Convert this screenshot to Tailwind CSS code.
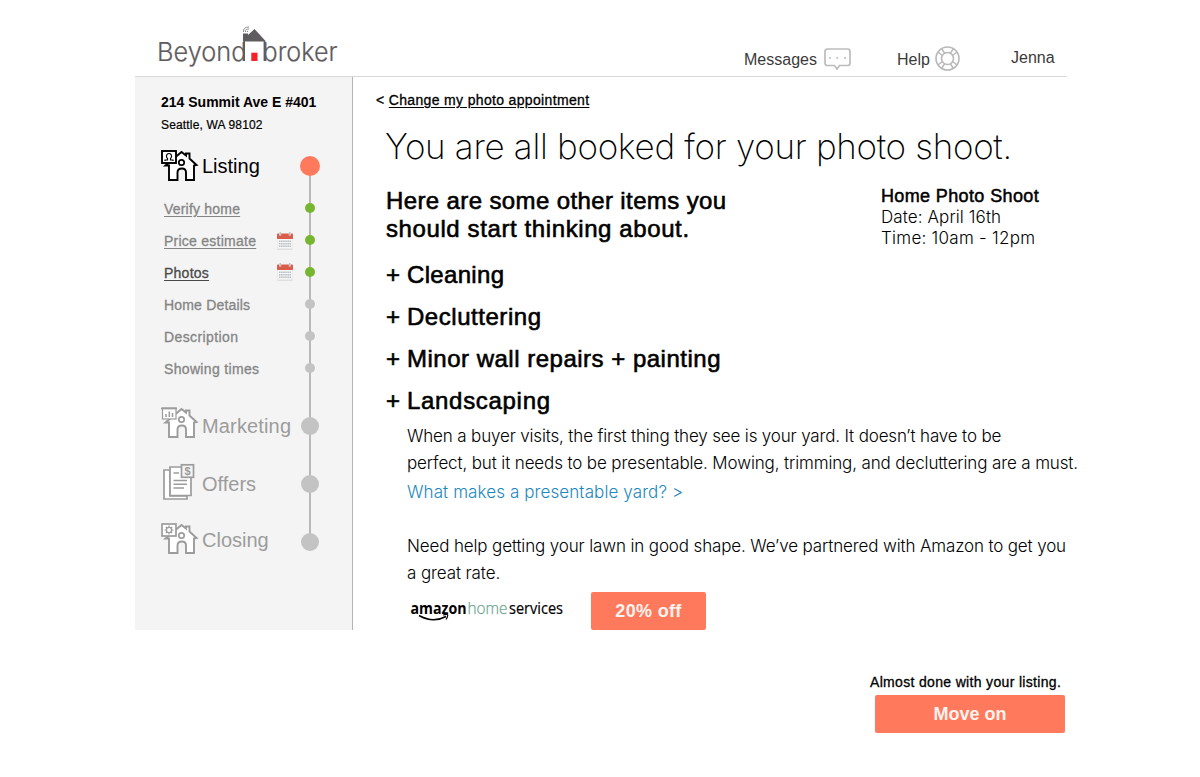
<!DOCTYPE html>
<html lang="en">
<head>
<meta charset="utf-8">
<title>Beyond broker</title>
<script src="https://cdn.jsdelivr.net/npm/@tailwindcss/browser@4"></script>
</head>
<body class="h-[777px] overflow-hidden bg-white font-['Liberation_Sans',sans-serif] text-black">

<svg class="hidden">
  <symbol id="house" viewBox="0 0 38 34">
    <path d="M4.500 16.500 L20.500 3 L25 6.500 V4.500 H28.500 V9.500 L35.500 16 L33 16.500 V31 H25 V23.500 Q25 19.500 21 19.500 Q16.500 19.500 16.500 23.500 V31 H8 V16.500 Z" fill="#fff" stroke="currentColor" stroke-width="1.900"/>
    <circle cx="20.500" cy="13.500" r="2.700" fill="none" stroke="currentColor" stroke-width="1.700"/>
  </symbol>
  <symbol id="calendar" viewBox="0 0 18 18">
    <rect x="1.500" y="2" width="15" height="15.500" fill="#c9c9c9"/>
    <rect x="1.500" y="2" width="15" height="14.700" fill="#f8f8f8"/>
    <rect x="1" y="1.500" width="16" height="5.500" rx=".8" fill="#d95d4b"/>
    <path d="M4.200 0V3.500M13.800 0V3.500" stroke="#eee" stroke-width="2"/>
    <path d="M4.200 0V3M13.800 0V3" stroke="#999" stroke-width=".8"/>
    <path d="M3 9.300H15M3 11.800H15M3 14.300H15" stroke="#b4bac2" stroke-width="1.600" stroke-dasharray="1.500 .6"/>
  </symbol>
</svg>

<header class="ml-[135px] flex h-[77px] w-[932px] items-start border-b border-[#d8d8d8] text-base leading-[20px] text-[#3a3a3a]">
  <svg class="mt-6 ml-[22px] h-[46px] w-[184px] shrink-0" viewBox="157 24 184 46">
    <g font-family="Inter, sans-serif" font-size="26" font-weight="300" fill="#5f5c60" stroke="#5f5c60" stroke-width=".2">
      <text x="157" y="61" textLength="89.500" lengthAdjust="spacingAndGlyphs">Beyond</text>
      <text x="262.500" y="61" textLength="75" lengthAdjust="spacingAndGlyphs">broker</text>
    </g>
    <path d="M243 41.500V33.500H248V35L254.500 29L266 41.500Z" fill="#5f5c60"/>
    <path d="M244.300 41V61M264.300 41V61" stroke="#5f5c60" stroke-width="1.400"/>
    <path d="M243.500 32Q243 27 249 27M245.500 32Q245 29 249 29M247.500 32V31" fill="none" stroke="#8a888b" stroke-width="1"/>
    <rect x="251.300" y="52.700" width="6.200" height="8.300" fill="#f5222a"/>
  </svg>
  <span class="ml-[403px] mt-[50px] w-[80px]">Messages</span>
  <svg class="mt-12 h-[23px] w-[27px]" viewBox="0 0 27 23" fill="none" stroke="#bcbcbc" stroke-width="1.700">
    <path d="M3.500 1H23.500Q26 1 26 3.500V15Q26 17.500 23.500 17.500H15.500L13 21L10.500 17.500H3.500Q1 17.500 1 15V3.500Q1 1 3.500 1Z"/>
    <path d="M5 10H7M12.200 10H14.200M20 10H22" stroke-width="1.600"/>
  </svg>
  <span class="ml-[46px] mt-[50px] w-[37px]">Help</span>
  <svg class="mt-[46px] h-[25px] w-[27px]" viewBox="0 0 27 25" fill="none" stroke="#b8b8b8" stroke-width="1.600">
    <circle cx="13.500" cy="12.500" r="11.500"/><circle cx="13.500" cy="12.500" r="6"/>
    <path d="M7.500 2.500L10.500 7M4 6L8.500 9.500M19.500 2.500L16.500 7M23 6L18.500 9.500M7.500 22.500L10.500 18M4 19L8.500 15.500M19.500 22.500L16.500 18M23 19L18.500 15.500" stroke-width="1.400"/>
  </svg>
  <span class="ml-[50px] mt-[48px]">Jenna</span>
</header>

<div class="ml-[135px] flex">
  <aside class="flex h-[553px] w-[218px] shrink-0 border-r border-[#b5b5b5] bg-[#f4f4f4]">
    <div class="ml-[26px] w-[139px] pt-4 whitespace-nowrap">
      <p class="text-sm leading-[18px] font-bold">214 Summit Ave E #401</p>
      <p class="mt-1.5 text-[12px] leading-4 tracking-[0.16px] [-webkit-text-stroke:0.2px]">Seattle, WA 98102</p>
      <div class="mt-3.5 flex h-[38px] items-center gap-[3px] text-xl">
        <svg class="h-[34px] w-[38px]" viewBox="0 0 38 34">
          <use href="#house"/>
          <rect x="1" y="2" width="14" height="12" fill="#fff" stroke="currentColor" stroke-width="1.900"/>
          <path d="M4 12V11H6.500V9.500Q5 8 5.500 6.500Q6 4.500 8 4.500T10.500 6.500Q11 8 9.500 9.500V11H12V12" fill="none" stroke="currentColor" stroke-width="1.200"/>
        </svg>
        <span>Listing</span>
      </div>
      <nav class="mt-2 ml-[3px] text-sm leading-8 text-[#858585] underline-offset-[2px] [-webkit-text-stroke:0.3px]">
        <a class="block tracking-[0.2px] underline">Verify home</a>
        <div class="flex items-center"><span class="w-28"><a class="tracking-[0.25px] underline">Price estimate</a></span><svg class="h-[18px] w-[18px]"><use href="#calendar"/></svg></div>
        <div class="flex items-center"><span class="w-28"><a class="tracking-[0.25px] text-[#4a4a4a] underline">Photos</a></span><svg class="-mt-0.5 h-[18px] w-[18px]"><use href="#calendar"/></svg></div>
        <a class="block tracking-[0.18px]">Home Details</a>
        <a class="block tracking-[0.4px]">Description</a>
        <a class="block tracking-[0.33px]">Showing times</a>
      </nav>
      <div class="mt-[21px] flex h-10 items-center gap-[3px] text-xl text-[#9c9c9c]">
        <svg class="-mt-1.5 h-[34px] w-[38px]" viewBox="0 0 38 34">
          <use href="#house"/>
          <rect x="1.500" y="2" width="13.500" height="11" fill="#fff" stroke="currentColor" stroke-width="1.200"/>
          <path d="M0 2.500H16" stroke="currentColor" stroke-width="1.800"/>
          <path d="M5 11V8M8.300 11V5.500M11.500 11V7" stroke="currentColor" stroke-width="1.500"/>
        </svg>
        <span class="tracking-[0.15px]">Marketing</span>
      </div>
      <div class="mt-[18px] flex h-10 items-center gap-[3px] text-xl text-[#9c9c9c]">
        <svg class="-mt-1.5 h-[38px] w-[38px]" viewBox="0 0 38 38" stroke="currentColor">
          <path d="M3 8H9V34H26V37H3Z" fill="#fff" stroke-width="1.700"/>
          <path d="M9 5H30V33.500H9Z" fill="#fff" stroke-width="1.700"/>
          <rect x="20.500" y="2.800" width="12" height="12.500" fill="#f4f4f4" stroke-width="1.700"/>
          <path d="M12.500 11H18M12.500 18.500H26M12.500 22.300H26M12.500 26H23" stroke-width="1.400"/>
          <text x="26.500" y="13.200" text-anchor="middle" font-size="11" font-weight="700" fill="currentColor" stroke="none">$</text>
        </svg>
        <span>Offers</span>
      </div>
      <div class="mt-4 flex h-10 items-center gap-[3px] text-xl text-[#9c9c9c]">
        <svg class="-mt-0.5 h-[34px] w-[38px]" viewBox="0 0 38 34">
          <use href="#house"/>
          <rect x="1" y="2" width="14" height="12" fill="#fff" stroke="currentColor" stroke-width="1.700"/>
          <circle cx="8" cy="8" r="2.600" fill="none" stroke="currentColor" stroke-width="1.300"/>
          <path d="M8 3.500V5M8 11V12.500M3.500 8H5M11 8H12.500M4.800 4.800L6 6M10 10L11.200 11.200M11.200 4.800L10 6M6 10L4.800 11.200" stroke="currentColor" stroke-width="1.200"/>
        </svg>
        <span>Closing</span>
      </div>
    </div>
    <div class="relative flex w-5 flex-col items-center pt-[79px]">
      <div class="absolute top-[89px] left-[9px] h-[376px] w-0.5 bg-[#bab8b8]"></div>
      <i class="relative size-5 rounded-full bg-[#ff7a5c]"></i>
      <i class="relative mt-[27px] size-2.5 rounded-full bg-[#76b52e]"></i>
      <i class="relative mt-[22px] size-2.5 rounded-full bg-[#76b52e]"></i>
      <i class="relative mt-[22px] size-2.5 rounded-full bg-[#76b52e]"></i>
      <i class="relative mt-[22px] size-2.5 rounded-full bg-[#c3c3c3]"></i>
      <i class="relative mt-[22px] size-2.5 rounded-full bg-[#c3c3c3]"></i>
      <i class="relative mt-[22px] size-2.5 rounded-full bg-[#c3c3c3]"></i>
      <i class="relative mt-11 size-[18px] rounded-full bg-[#c3c3c3]"></i>
      <i class="relative mt-10 size-[18px] rounded-full bg-[#c3c3c3]"></i>
      <i class="relative mt-10 size-[18px] rounded-full bg-[#c3c3c3]"></i>
    </div>
  </aside>

  <main class="w-[740px] pl-[33px] whitespace-nowrap">
    <p class="mt-[13px] -ml-2.5 text-sm leading-5 tracking-[0.34px] [-webkit-text-stroke:0.3px]">&lt; <a class="underline underline-offset-[2px]">Change my photo appointment</a></p>
    <h1 class="mt-[16px] -ml-px font-['Inter',sans-serif] text-[35px] leading-[40px] font-extralight tracking-[-0.3px]">You are all booked for your photo shoot.</h1>
    <div class="mt-[21px] flex">
      <h2 class="w-[495px] text-2xl leading-7 [-webkit-text-stroke:0.6px]"><span class="block tracking-[0.38px]">Here are some other items you</span><span class="block tracking-[0.6px]">should start thinking about.</span></h2>
      <div class="-mt-px h-10 font-['Inter',sans-serif] text-[17px] leading-[21px] font-light">
        <p class="font-['Liberation_Sans',sans-serif] text-lg leading-[21px] font-normal tracking-[0.37px] [-webkit-text-stroke:0.5px]">Home Photo Shoot</p>
        <p class="tracking-[0.1px]">Date: April 16th</p>
        <p class="tracking-[0.26px]">Time: 10am - 12pm</p>
      </div>
    </div>
    <ul class="mt-[11px] text-2xl leading-[42px] [-webkit-text-stroke:0.6px]">
      <li class="flex"><span class="w-[21px]">+</span><span class="tracking-[0.32px]">Cleaning</span></li>
      <li class="flex"><span class="w-[21px]">+</span><span class="tracking-[0.54px]">Decluttering</span></li>
      <li class="flex"><span class="w-[21px]">+</span><span class="tracking-[0.5px]">Minor wall repairs + painting</span></li>
      <li class="flex"><span class="w-[21px]">+</span><span class="tracking-[0.69px]">Landscaping</span></li>
    </ul>
    <div class="mt-px ml-[21px] font-['Inter',sans-serif] text-[17px] leading-[27px] font-light">
      <p class="tracking-[-0.16px]">When a buyer visits, the first thing they see is your yard. It doesn’t have to be</p>
      <p class="tracking-[-0.13px]">perfect, but it needs to be presentable. Mowing, trimming, and decluttering are a must.</p>
      <a class="mt-0.5 block tracking-[0.1px] text-[#1b87c0]">What makes a presentable yard? &gt;</a>
      <p class="mt-[27px] tracking-[-0.14px]">Need help getting your lawn in good shape. We’ve partnered with Amazon to get you</p>
      <p class="tracking-[-0.1px]">a great rate.</p>
      <div class="mt-[5px] flex">
        <svg class="mt-1 ml-[3px] h-7 w-[160px]" viewBox="410 596 160 28" font-family="Open Sans, sans-serif" font-size="15.500">
          <text x="410.500" y="613.500" textLength="56" lengthAdjust="spacingAndGlyphs" font-weight="700">amazon</text>
          <text x="467.500" y="613.500" textLength="40" lengthAdjust="spacingAndGlyphs" font-weight="300" fill="#6fa694" stroke="#6fa694" stroke-width=".25">home</text>
          <text x="509" y="613.500" textLength="54" lengthAdjust="spacingAndGlyphs" font-weight="400" stroke="#000" stroke-width=".2">services</text>
          <path d="M419 615.500Q433 623.500 446 616.500" fill="none" stroke="#000" stroke-width="1.500"/>
          <path d="M443 615Q448 613.500 447.700 615.500Q447.500 617.500 446 619.500" fill="none" stroke="#000" stroke-width="1.200"/>
        </svg>
        <button class="ml-[21px] h-[38px] w-[115px] rounded-xs bg-[#ff7a5c] font-['Liberation_Sans',sans-serif] text-lg font-bold tracking-[0.33px] text-[#fff3ef]">20% off</button>
      </div>
    </div>
  </main>
</div>

<footer class="mt-[43px] ml-[870px] w-[195px]">
  <p class="text-sm leading-[18px] tracking-[0.33px] whitespace-nowrap [-webkit-text-stroke:0.3px]">Almost done with your listing.</p>
  <button class="mt-1 ml-[5px] block h-[38px] w-[190px] rounded-xs bg-[#ff7a5c] text-lg font-bold text-[#fff3ef]">Move on</button>
</footer>
</body>
</html>
